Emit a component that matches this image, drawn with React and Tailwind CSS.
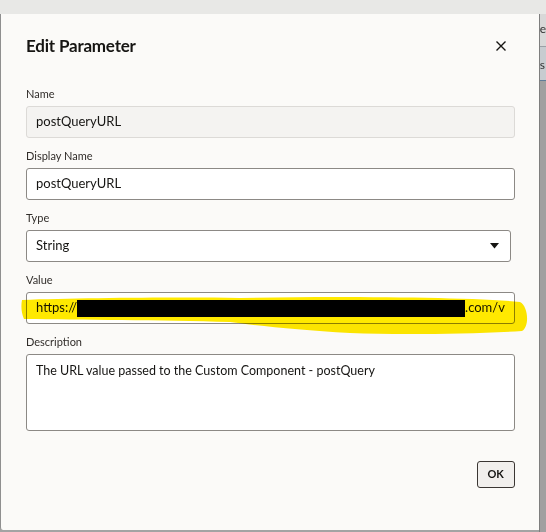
import React from "react";

const font = { fontFamily: 'Lato, "Noto Sans", Arial, sans-serif' };

function Label({ children }) {
  return (
    <div className="text-[11px] leading-[16px] text-[#312d2a] mb-[4px]">{children}</div>
  );
}

export default function App() {
  return (
    <div
      className="relative w-[546px] h-[532px] overflow-hidden bg-[#a3a3a3] flex flex-col"
      style={font}
    >
      <div className="h-[14px] w-full bg-[#e8e8e6] shrink-0" />
      <div className="flex flex-1 min-h-0">
        {/* dialog */}
        <div className="w-[540px] h-[516px] bg-[#fbfaf8] border-l border-[#8f8f8f] rounded-bl-[3px] flex flex-col pl-[25px] pr-[24px]">
          <div className="h-[64px] flex items-center justify-between shrink-0">
            <div className="text-[17px] font-bold text-[#161513] tracking-[-0.2px]">
              Edit Parameter
            </div>
            <svg width="12" height="12" viewBox="0 0 12 12" className="mr-[8px]">
              <path d="M1.5 1.5 L10.5 10.5 M10.5 1.5 L1.5 10.5" stroke="#161513" strokeWidth="1.4" />
            </svg>
          </div>

          <div className="pt-[8px] flex flex-col">
            <Label>Name</Label>
            <div className="h-[32px] rounded-[3px] border border-[#dcdad7] bg-[#f4f3f1] flex items-center px-[9px] text-[13px] text-[#161513]">
              postQueryURL
            </div>

            <div className="mt-[10px]">
              <Label>Display Name</Label>
              <div className="h-[32px] rounded-[3px] border border-[#8c8985] bg-white flex items-center px-[9px] text-[13px] text-[#161513]">
                postQueryURL
              </div>
            </div>

            <div className="mt-[10px]">
              <Label>Type</Label>
              <div className="h-[32px] w-[485px] rounded-[3px] border border-[#8c8985] bg-white flex items-center justify-between pl-[9px] pr-[11px] text-[13px] text-[#161513]">
                <span>String</span>
                <svg width="9" height="6" viewBox="0 0 9 6">
                  <path d="M0 0 L9 0 L4.5 5.5 Z" fill="#161513" />
                </svg>
              </div>
            </div>

            <div className="mt-[10px]">
              <Label>Value</Label>
              <div className="h-[32px] rounded-[3px] border border-[#8c8985] bg-white flex items-center pl-[9px] pr-[4px] text-[13px] text-[#161513]">
                <div className="flex items-center whitespace-nowrap overflow-hidden">
                  <span>https://</span>
                  <span className="inline-block w-[388px] h-[17px] bg-black shrink-0" />
                  <span>.com/v</span>
                </div>
              </div>
            </div>

            <div className="mt-[10px]">
              <Label>Description</Label>
              <div className="h-[77px] rounded-[3px] border border-[#8c8985] bg-white px-[9px] pt-[7px] text-[12.5px] leading-[18px] text-[#161513]">
                The URL value passed to the Custom Component - postQuery
              </div>
            </div>

            <div className="mt-[30px] flex justify-end">
              <div className="w-[38px] h-[27px] rounded-[3px] border border-[#3a3633] bg-[#f1efed] flex items-center justify-center text-[11px] font-bold text-[#161513]">
                OK
              </div>
            </div>
          </div>
        </div>

        {/* right strip: page behind the dialog */}
        <div className="flex-1 flex">
          <div className="w-[1px] h-full bg-[#7e7e7e]" />
          <div className="flex-1 flex flex-col">
            <div className="h-[32px] bg-[#d8d8d8] overflow-hidden text-[12px] leading-[30px] text-[#333]">
              e
            </div>
            <div className="h-[1px] bg-[#9aa0a6]" />
            <div className="h-[33px] bg-[#c7ccd0] overflow-hidden text-[12px] leading-[36px] text-[#333]">
              s
            </div>
            <div className="h-[1px] bg-[#5f7d99]" />
            <div className="flex-1 bg-[#a0a0a0]" />
          </div>
        </div>
      </div>

      {/* marker highlight drawn over the value field */}
      <svg
        className="absolute left-0 top-0 pointer-events-none mix-blend-multiply"
        width="546"
        height="532"
        viewBox="0 0 546 532"
      >
        <path
          d="M22,300 C80,298 180,297 240,298 L316,297 C400,297 480,298 520,302 C528,306 530,326 522,331 C470,334 400,335 350,333 C300,330 260,326 230,322 C160,320 80,320 24,319 C21,312 21,305 22,300 Z"
          fill="#ffe900"
        />
      </svg>
    </div>
  );
}
